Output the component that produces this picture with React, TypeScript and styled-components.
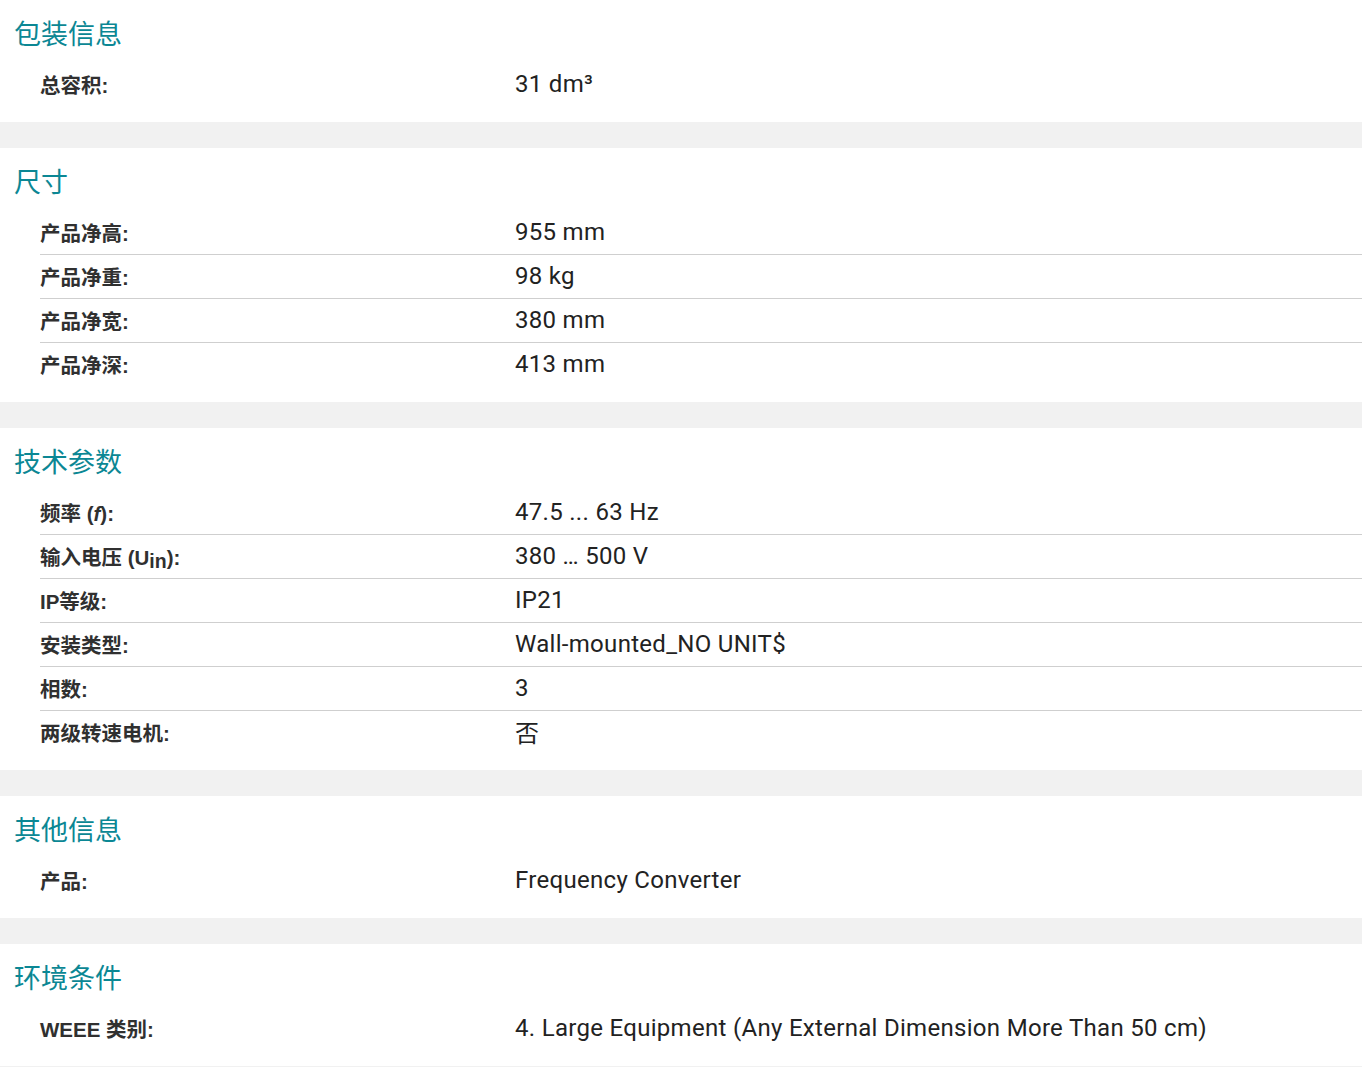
import styled, { createGlobalStyle } from "styled-components";
import { ReactNode } from "react";

const GlobalStyle = createGlobalStyle`
  body {
    margin: 0;
    background: #f1f1f1;
    font-family: Roboto, "Noto Sans CJK SC", sans-serif;
  }
`;

const Page = styled.div`
  display: flex;
  flex-direction: column;
  gap: 26px;
`;

const Section = styled.section`
  background: #ffffff;
  padding: 14px 0 15px 0;
`;

const SectionTitle = styled.h2`
  margin: 0 0 11px 14px;
  font-family: "Noto Sans CJK SC", sans-serif;
  font-size: 27px;
  line-height: 38px;
  font-weight: 400;
  color: #0b8794;
`;

const RowList = styled.div`
  margin-left: 40px;
`;

const Row = styled.div`
  display: flex;
  align-items: center;
  box-sizing: border-box;
  height: 44px;
  padding-bottom: 2px;
  border-bottom: 1px solid #cfcfcf;
  &:last-child {
    border-bottom-color: transparent;
  }
`;

const Label = styled.div`
  width: 475px;
  flex-shrink: 0;
  font-family: "Liberation Sans", "Noto Sans CJK SC", sans-serif;
  font-weight: 700;
  font-size: 20.5px;
  color: #303030;
  sub {
    font-size: 0.95em;
    line-height: 0;
    vertical-align: -3px;
  }
`;

const Value = styled.div`
  font-family: Roboto, "Noto Sans CJK SC", sans-serif;
  font-size: 24px;
  letter-spacing: 0.3px;
  color: #222222;
`;

type Item = { label: ReactNode; value: string };
type Group = { title: string; items: Item[] };

const groups: Group[] = [
  {
    title: "包装信息",
    items: [{ label: "总容积:", value: "31 dm³" }],
  },
  {
    title: "尺寸",
    items: [
      { label: "产品净高:", value: "955 mm" },
      { label: "产品净重:", value: "98 kg" },
      { label: "产品净宽:", value: "380 mm" },
      { label: "产品净深:", value: "413 mm" },
    ],
  },
  {
    title: "技术参数",
    items: [
      { label: <>频率 (<i>f</i>):</>, value: "47.5 ... 63 Hz" },
      { label: <>输入电压 (U<sub>in</sub>):</>, value: "380 … 500 V" },
      { label: "IP等级:", value: "IP21" },
      { label: "安装类型:", value: "Wall-mounted_NO UNIT$" },
      { label: "相数:", value: "3" },
      { label: "两级转速电机:", value: "否" },
    ],
  },
  {
    title: "其他信息",
    items: [{ label: "产品:", value: "Frequency Converter" }],
  },
  {
    title: "环境条件",
    items: [
      { label: "WEEE 类别:", value: "4. Large Equipment (Any External Dimension More Than 50 cm)" },
    ],
  },
];

export default function App() {
  return (
    <>
      <GlobalStyle />
      <Page>
        {groups.map((g) => (
          <Section key={g.title}>
            <SectionTitle>{g.title}</SectionTitle>
            <RowList>
              {g.items.map((item, i) => (
                <Row key={i}>
                  <Label>{item.label}</Label>
                  <Value>{item.value}</Value>
                </Row>
              ))}
            </RowList>
          </Section>
        ))}
      </Page>
    </>
  );
}
